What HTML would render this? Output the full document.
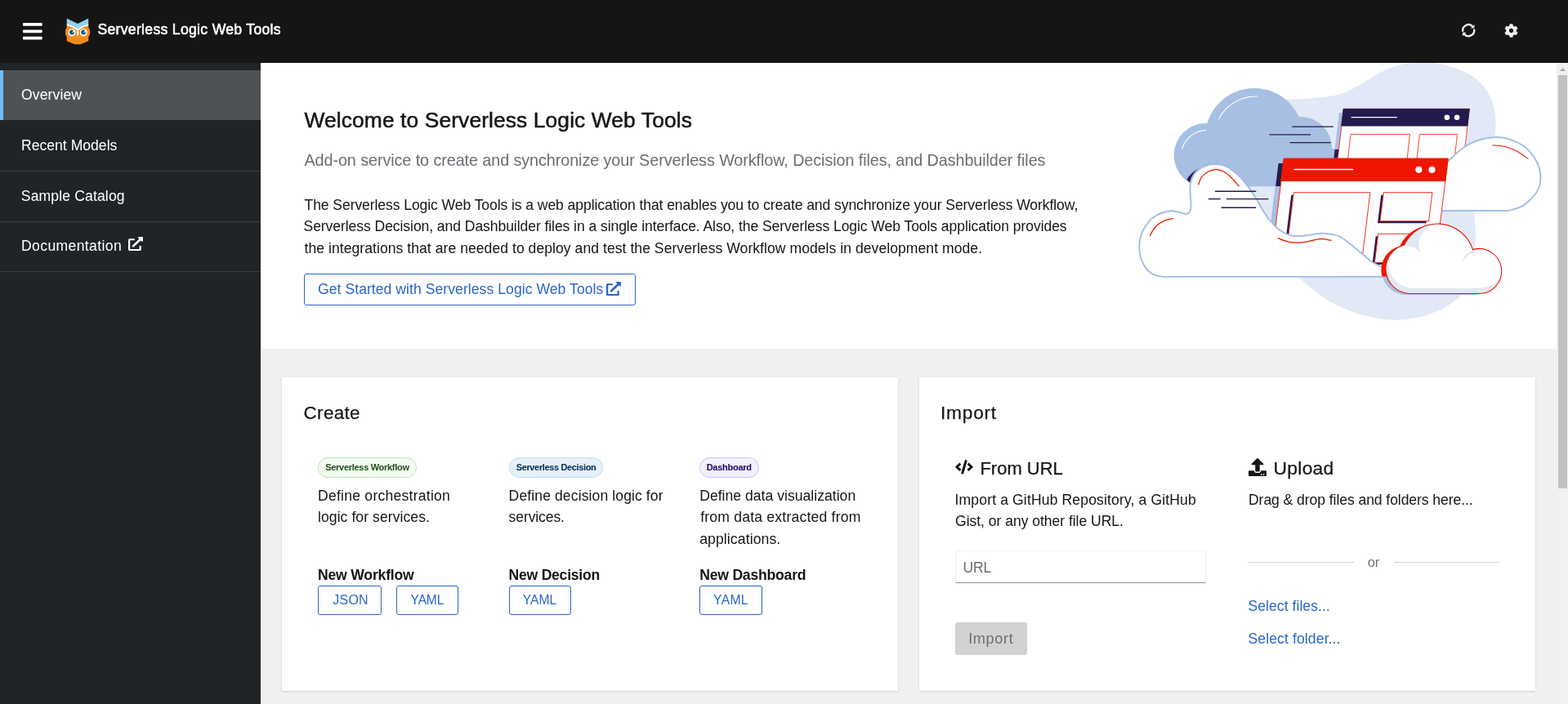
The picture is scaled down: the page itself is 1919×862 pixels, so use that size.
<!DOCTYPE html>
<html lang="en">
<head>
<meta charset="utf-8">
<title>Serverless Logic Web Tools</title>
<style>
*{box-sizing:border-box}
html,body{margin:0;padding:0}
body{width:1919px;height:862px;overflow:hidden;position:relative;background:#f0f0f0;color:#151515;font-family:"Liberation Sans",sans-serif;font-size:17.6px;-webkit-font-smoothing:antialiased}
h1,h2,h3,p,ul,li{margin:0;padding:0;font-weight:400;list-style:none}
.t{position:absolute;white-space:nowrap;line-height:40px;height:40px;display:block}
.ico{position:absolute;display:block;overflow:visible}
.masthead,.sidebar,.main{will-change:transform}
.masthead{position:absolute;left:0;top:0;width:1919px;height:77px;background:#151515}
.sidebar{position:absolute;left:0;top:77px;width:319px;height:785px;background:#212427}
.nav-item{position:absolute;left:0;width:319px;height:62px}
.nav-item.current{background:#4f5255}
.nav-item.current::before{content:"";position:absolute;left:0;top:0;bottom:0;width:4px;background:#73bcf7}
.nav-sep{position:absolute;left:0;width:319px;height:1px;background:#3c3f42}
.main{position:absolute;left:319px;top:77px;width:1586px;height:785px;overflow:hidden;background:#f0f0f0}
.hero{position:absolute;left:0;top:0;width:1586px;height:350px;background:#fff;overflow:hidden}
button{appearance:none;-webkit-appearance:none;margin:0;padding:0;font:inherit;color:inherit;text-align:left;overflow:visible;cursor:pointer}
a{text-decoration:none;color:inherit}
.btn{position:absolute;display:block;border:1px solid #2a65ca;border-radius:3px;background:#fff}
.btn.disabled{border:0;background:#d2d2d2}
.card{position:absolute;top:385px;width:754px;height:384px;background:#fff;box-shadow:0 1px 2px 0 rgba(3,3,3,.12),0 0 2px 0 rgba(3,3,3,.06)}
.label{position:absolute;height:25px;border-radius:13px;border:1px solid}
.label.green{background:#f3faf2;border-color:#bde5b8}
.label.blue{background:#e7f1fa;border-color:#bee1f4}
.label.purple{background:#f2f0fc;border-color:#cbc1ff}
.input{position:absolute;display:block;margin:0;background:#fff;border:1px solid #f0f0f0;border-bottom-color:#8a8d90;border-radius:0;outline:0;font-family:inherit;color:#151515}
.input::placeholder{color:#6a6e73;opacity:1}
.hr{position:absolute;height:1px;background:#d2d2d2}
.scroll{position:absolute;left:1905px;top:77px;width:14px;height:785px;background:#f1f1f1}
.scroll .thumb{position:absolute;left:2px;top:15px;width:11px;height:506px;background:#c1c1c1}
.scroll .up{position:absolute;left:0;top:0;width:14px;height:15px}
</style>
</head>
<body>
<header class="masthead">
<svg class="ico" style="left:27.7px;top:24.5px;width:23.7px;height:26.6px" viewBox="0 0 448 512" preserveAspectRatio="none" fill="#fff" aria-hidden="true"><path d="M16 132h416c8.837 0 16-7.163 16-16V76c0-8.837-7.163-16-16-16H16C7.163 60 0 67.163 0 76v40c0 8.837 7.163 16 16 16zm0 160h416c8.837 0 16-7.163 16-16v-40c0-8.837-7.163-16-16-16H16c-8.837 0-16 7.163-16 16v40c0 8.837 7.163 16 16 16zm0 160h416c8.837 0 16-7.163 16-16v-40c0-8.837-7.163-16-16-16H16c-8.837 0-16 7.163-16 16v40c0 8.837 7.163 16 16 16z"/></svg>
<svg class="ico" style="left:78px;top:20px;width:36px;height:38px" viewBox="78 20 36 38" aria-hidden="true">
<path d="M81.7 30.5C81.7 30.5 88 31.5 95.1 36.2C102 31.5 108.2 30.5 108.2 30.5L108.2 33.6C109.6 35.2 110.2 37.2 110.2 39.2C110.2 41.4 109.5 43.6 108.2 45.2L108.2 50.2L98.4 54.2L91.5 54.2L81.7 50.2L81.7 45.2C80.4 43.6 79.9 41.4 79.9 39.2C79.9 37.2 80.4 35.2 81.7 33.6Z" fill="#f28b1e"/>
<path d="M81.7 22.5L95.1 28.9L108.2 22.5L108.2 30.2C103 31 98.6 33 95.1 35.6C91.4 33 87 31 81.7 30.2Z" fill="#90d2e8"/>
<path d="M81.7 29.7C87 30.5 91.4 32.4 95.1 35.2C98.6 32.4 103 30.5 108.2 29.7L108.2 31.4C103.4 32.2 99.4 34.2 96 37.2L96 41.4L94.2 41.4L94.2 37.2C90.8 34.2 86.6 32.2 81.7 31.4Z" fill="#fff"/>
<circle cx="88" cy="39.8" r="4.6" fill="#fff"/>
<circle cx="102.2" cy="39.8" r="4.6" fill="#fff"/>
<path d="M88.3 39.9L91.1 39.3A3.1 3.1 0 1 1 89.9 37.1Z" fill="#175a78"/>
<path d="M102.5 39.9L105.3 39.3A3.1 3.1 0 1 1 104.1 37.1Z" fill="#175a78"/>
<path d="M94 41.2C94 40.4 96.2 40.4 96.2 41.2C96.2 42.4 95.7 43.6 95.1 44.2C94.5 43.6 94 42.4 94 41.2Z" fill="#f4f4f4"/>
</svg>
<span class="t" style="left:119.4px;top:16px;font-size:17.6px;letter-spacing:0.312px;color:#ffffff;-webkit-text-stroke:0.55px #fff;">Serverless Logic Web Tools</span>
<svg class="ico" style="left:1784px;top:24px;width:27px;height:27px" viewBox="1784 24 27 27" aria-hidden="true"><path d="M1790.35 38.66A7.0 7.0 0 0 1 1802.40 32.52M1804.05 35.74A7.0 7.0 0 0 1 1792.00 41.88" fill="none" stroke="#f0f0f0" stroke-width="2.4"/><path d="M1804.36 34.54L1804.56 30.09L1799.91 34.58ZM1790.04 39.86L1789.84 44.31L1794.49 39.82Z" fill="#f0f0f0"/></svg>
<svg class="ico" style="left:1840.8px;top:29px;width:17px;height:17px" viewBox="0 0 512 512" preserveAspectRatio="none" fill="#f0f0f0" aria-hidden="true"><path d="M487.4 315.7l-42.6-24.6c4.3-23.2 4.3-47 0-70.2l42.6-24.6c4.9-2.8 7.1-8.6 5.5-14-11.1-35.6-30-67.8-54.7-94.6-3.8-4.1-10-5.1-14.8-2.3L380.8 110c-17.9-15.4-38.5-27.3-60.8-35.1V25.8c0-5.6-3.9-10.5-9.4-11.7-36.7-8.2-74.3-7.8-109.2 0-5.5 1.2-9.4 6.1-9.4 11.7V75c-22.2 7.9-42.8 19.8-60.8 35.1L88.7 85.5c-4.9-2.8-11-1.9-14.8 2.3-24.7 26.7-43.6 58.9-54.7 94.6-1.7 5.4.6 11.2 5.5 14L67.3 221c-4.3 23.2-4.3 47 0 70.2l-42.6 24.6c-4.9 2.8-7.1 8.6-5.5 14 11.1 35.6 30 67.8 54.7 94.6 3.8 4.1 10 5.1 14.8 2.3l42.6-24.6c17.9 15.4 38.5 27.3 60.8 35.1v49.2c0 5.6 3.9 10.5 9.4 11.7 36.7 8.2 74.3 7.8 109.2 0 5.5-1.2 9.4-6.1 9.4-11.7v-49.2c22.2-7.9 42.8-19.8 60.8-35.1l42.6 24.6c4.9 2.8 11 1.9 14.8-2.3 24.7-26.7 43.6-58.9 54.7-94.6 1.5-5.5-.7-11.3-5.6-14.1zM256 336c-44.1 0-80-35.9-80-80s35.9-80 80-80 80 35.9 80 80-35.9 80-80 80z"/></svg>
</header>
<nav class="sidebar"><ul>
<li class="nav-item current" style="top:9px;height:61px"><a class="t" style="left:26.1px;top:10px;font-size:17.6px;letter-spacing:0.086px;color:#ffffff;">Overview</a></li>
<li class="nav-item" style="top:70px"><a class="t" style="left:26.0px;top:11px;font-size:17.6px;color:#ffffff;">Recent Models</a></li>
<li class="nav-item" style="top:132px"><a class="t" style="left:25.8px;top:11px;font-size:17.6px;letter-spacing:0.123px;color:#ffffff;">Sample Catalog</a></li>
<li class="nav-item" style="top:194px"><a class="t" style="left:26.0px;top:10px;font-size:17.6px;letter-spacing:0.367px;color:#ffffff;">Documentation</a><svg class="ico" style="left:156.9px;top:18.7px;width:18.0px;height:17.0px" viewBox="0 0 512 512" preserveAspectRatio="none" fill="#fff" aria-hidden="true"><path d="M432,320H400a16,16,0,0,0-16,16V448H64V128H208a16,16,0,0,0,16-16V80a16,16,0,0,0-16-16H48A48,48,0,0,0,0,112V464a48,48,0,0,0,48,48H400a48,48,0,0,0,48-48V336A16,16,0,0,0,432,320ZM488,0h-128c-21.37,0-32.05,25.91-17,41l35.73,35.73L135,320.37a24,24,0,0,0,0,34L157.67,377a24,24,0,0,0,34,0L435.28,133.32,471,169c15,15,41,4.5,41-17V24A24,24,0,0,0,488,0Z"/></svg></li>
</ul>
<div class="nav-sep" style="top:132px"></div>
<div class="nav-sep" style="top:194px"></div>
<div class="nav-sep" style="top:255px"></div>
</nav>
<main class="main">
<section class="hero">
<svg class="illus" style="position:absolute;left:1061px;top:0;width:525px;height:350px" viewBox="1380 77 525 350" aria-hidden="true">
<path d="M1560.0 125.0C1573.3 120.2 1588.3 122.2 1600.0 121.0C1611.7 119.8 1621.8 119.1 1630.0 117.6C1638.2 116.1 1642.7 114.7 1649.0 112.0C1655.3 109.3 1661.7 105.2 1668.0 101.6C1674.3 98.0 1680.4 93.5 1686.7 90.2C1693.0 86.9 1699.3 83.8 1705.6 81.7C1711.9 79.6 1718.2 78.5 1724.5 77.6C1730.8 76.7 1737.2 76.4 1743.4 76.5C1749.7 76.6 1755.7 76.8 1762.0 78.0C1768.3 79.2 1774.7 81.3 1781.0 83.6C1787.3 85.9 1794.3 88.4 1800.0 92.0C1805.7 95.6 1810.9 100.2 1815.0 105.0C1819.1 109.8 1822.3 115.1 1824.7 120.5C1827.1 125.9 1828.5 131.8 1829.5 137.5C1830.5 143.2 1830.8 148.8 1830.5 155.0C1830.2 161.2 1830.1 166.7 1828.0 175.0C1825.9 183.3 1821.3 195.0 1818.0 205.0C1814.7 215.0 1810.2 225.8 1808.0 235.0C1805.8 244.2 1804.8 251.3 1804.5 260.0C1804.2 268.7 1806.1 278.3 1806.0 287.0C1805.9 295.7 1805.5 303.2 1804.0 312.0C1802.5 320.8 1799.8 331.6 1797.0 340.0C1794.2 348.4 1792.8 355.8 1787.0 362.4C1781.2 369.0 1770.8 375.0 1762.0 379.4C1753.2 383.8 1743.4 386.8 1734.0 388.8C1724.6 390.9 1715.1 391.9 1705.6 391.7C1696.1 391.5 1686.4 389.9 1677.0 387.9C1667.6 385.8 1657.5 382.7 1649.0 379.4C1640.5 376.1 1632.8 372.1 1625.8 368.0C1618.8 363.9 1612.9 359.5 1606.9 354.8C1600.9 350.1 1597.8 347.2 1590.0 339.7C1582.2 332.2 1571.7 323.3 1560.0 310.0C1548.3 296.7 1530.0 278.3 1520.0 260.0C1510.0 241.7 1500.0 218.3 1500.0 200.0C1500.0 181.7 1510.0 162.5 1520.0 150.0C1530.0 137.5 1546.7 129.8 1560.0 125.0Z" fill="#e0e9f5"/>
<g fill="#a7bfe3">
<circle cx="1535" cy="168" r="60" />
<circle cx="1476" cy="190" r="39.3" />
<circle cx="1592" cy="181" r="38" />
<polygon points="1462.0,228.3 1462.0,190.0 1629.0,175.0 1629.0,182.0 1634.0,182.0 1634.0,194.0 1570.0,194.0 1566.0,228.3" />
</g>
<path d="M1491.6 145.8C1492.4 144.5 1494.8 140.2 1496.7 137.7C1498.7 135.2 1500.9 132.8 1503.3 130.7C1505.7 128.6 1508.4 126.7 1511.1 125.1C1513.9 123.4 1516.8 122.1 1519.8 121.0C1522.8 119.9 1526.0 119.1 1529.2 118.6C1532.3 118.1 1537.2 118.1 1538.8 118.0" fill="none" stroke="#fff" stroke-width="1.1" stroke-linecap="round"/>
<path d="M1446.7 182.3C1447.1 181.3 1448.2 178.1 1449.2 176.2C1450.2 174.3 1451.5 172.4 1452.9 170.8C1454.3 169.1 1455.9 167.5 1457.6 166.2C1459.3 164.8 1461.2 163.6 1463.2 162.7C1465.2 161.7 1467.3 161.0 1469.4 160.4C1471.5 159.9 1474.8 159.7 1475.9 159.5" fill="none" stroke="#fff" stroke-width="1.1" stroke-linecap="round"/>
<path d="M1452.4 219.7L1456 223.6Q1458.5 213 1467 206.3Q1458 211 1452.4 219.7Z" fill="#251a4e"/>
<line x1="1581.4" y1="155.1" x2="1631.8" y2="155.1" stroke="#251a4e" stroke-width="1.4"/>
<line x1="1553.6" y1="164.9" x2="1604" y2="164.9" stroke="#251a4e" stroke-width="1.4"/>
<line x1="1578.5" y1="174.6" x2="1628.8" y2="174.6" stroke="#251a4e" stroke-width="1.4"/>
<polygon points="1638.9,138.0 1643.8,138.0 1638.3,185.0 1633.4,185.0" fill="#a7bfe3"/>
<polygon points="1633.6,183.0 1638.6,183.0 1637.4,193.8 1632.4,193.8" fill="#251a4e"/>
<polygon points="1644.2,133.4 1798.3,133.4 1790.7,200.0 1636.6,200.0" fill="#fff" stroke="#ee1600" stroke-width="0.8"/>
<polygon points="1644.2,133.4 1798.3,133.4 1795.9,154.1 1641.8,154.1" fill="#251a4e" stroke="#251a4e" stroke-width="0.9"/>
<line x1="1653.6" y1="143.6" x2="1709.8" y2="143.6" stroke="#fff" stroke-width="1.2"/>
<circle cx="1770.9" cy="143.7" r="3.3" fill="#fff"/>
<circle cx="1783.1" cy="143.7" r="3.3" fill="#fff"/>
<polygon points="1653.0,164.4 1725.5,164.4 1721.5,200.0 1649.0,200.0" fill="#fff" stroke="#ee1600" stroke-width="0.8"/>
<polygon points="1737.4,164.4 1783.5,164.4 1779.5,200.0 1733.4,200.0" fill="#fff" stroke="#ee1600" stroke-width="0.8"/>
<path d="M1760.0 210.0C1762.0 208.0 1766.7 202.8 1771.8 198.0C1776.9 193.2 1784.4 185.4 1790.7 181.0C1797.0 176.6 1803.0 173.7 1809.6 171.5C1816.2 169.3 1824.1 168.2 1830.4 168.1C1836.7 167.9 1841.4 168.6 1847.4 170.6C1853.4 172.6 1860.9 175.8 1866.3 180.0C1871.7 184.2 1876.4 190.5 1879.6 196.0C1882.8 201.5 1884.6 207.4 1885.2 213.1C1885.8 218.8 1885.0 225.3 1883.4 230.0C1881.8 234.7 1879.3 237.5 1875.8 241.3C1872.3 245.1 1867.6 249.9 1862.6 252.7C1857.5 255.5 1848.3 257.1 1845.5 258.0L1760 258Z" fill="#fff" stroke="#a3bde3" stroke-width="1.9"/>
<path d="M1826.6 177.8C1828.8 178.0 1835.8 178.3 1840.0 179.2C1844.2 180.1 1848.3 181.4 1852.0 183.0C1855.7 184.6 1858.9 186.6 1862.0 188.5C1865.1 190.4 1869.1 193.6 1870.5 194.6" fill="none" stroke="#ee1600" stroke-width="1.1"/>
<polygon points="1560.7,228.0 1567.2,228.0 1559.6,290.0 1553.1,290.0" fill="#a7bfe3"/>
<polygon points="1564.6,200.0 1570.6,200.0 1567.2,228.0 1561.2,228.0" fill="#251a4e"/>
<polygon points="1571.3,194.2 1772.2,194.2 1755.1,334.0 1554.2,334.0" fill="#fff" stroke="#ee1600" stroke-width="0.9"/>
<polygon points="1571.3,194.2 1772.2,194.2 1768.9,221.6 1568.0,221.6" fill="#ee1600" stroke="#ee1600" stroke-width="0.9"/>
<line x1="1583.3" y1="207.5" x2="1656.5" y2="207.5" stroke="#fff" stroke-width="1.5"/>
<circle cx="1736.4" cy="207.8" r="4.1" fill="#fff"/>
<circle cx="1752.5" cy="207.8" r="4.1" fill="#fff"/>
<polygon points="1580.3,238.7 1583.3,238.7 1573.0,320.0 1663.6,320.0 1663.6,322.5 1570.0,322.5" fill="#251a4e"/><polygon points="1583.3,235.7 1676.9,235.7 1666.6,320.0 1573.0,320.0" fill="#fff" stroke="#ee1600" stroke-width="0.9"/>
<polygon points="1690.3,238.7 1693.3,238.7 1689.0,270.7 1745.6,270.7 1745.6,273.2 1686.0,273.2" fill="#251a4e"/><polygon points="1693.3,235.7 1752.9,235.7 1748.6,270.7 1689.0,270.7" fill="#fff" stroke="#ee1600" stroke-width="0.9"/>
<polygon points="1683.7,289.3 1686.7,289.3 1682.4,321.5 1739.2,321.5 1739.2,324.0 1679.4,324.0" fill="#251a4e"/><polygon points="1686.7,286.3 1746.5,286.3 1742.2,321.5 1682.4,321.5" fill="#fff" stroke="#ee1600" stroke-width="0.9"/>
<path d="M1423.7 338.9C1422.5 338.7 1418.8 338.2 1416.5 337.6C1414.2 337.0 1412.1 336.3 1410.2 335.3C1408.3 334.3 1406.7 332.9 1405.2 331.5C1403.7 330.1 1402.4 328.4 1401.2 326.6C1400.0 324.8 1398.9 322.6 1398.0 320.5C1397.1 318.4 1396.4 316.2 1395.8 314.0C1395.2 311.8 1394.8 309.6 1394.5 307.5C1394.2 305.4 1394.3 303.4 1394.3 301.5C1394.3 299.6 1394.5 297.8 1394.7 296.0C1395.0 294.2 1395.2 292.7 1395.8 290.7C1396.3 288.7 1397.1 286.1 1398.0 284.0C1398.9 281.9 1400.0 280.1 1401.2 278.1C1402.4 276.2 1403.8 274.1 1405.3 272.3C1406.8 270.5 1408.5 268.7 1410.2 267.3C1411.9 265.9 1413.5 264.8 1415.3 263.7C1417.1 262.6 1419.0 261.8 1421.0 261.0C1423.0 260.2 1424.9 259.6 1427.0 259.2C1429.1 258.8 1431.5 258.4 1433.5 258.3C1435.5 258.2 1437.2 258.6 1439.0 258.9C1440.8 259.2 1442.7 259.7 1444.3 260.1C1445.9 260.5 1447.2 261.2 1448.5 261.5C1449.8 261.8 1451.0 262.0 1452.0 261.9C1453.0 261.8 1453.9 261.5 1454.6 261.0C1455.3 260.5 1455.8 259.9 1456.2 259.0C1456.7 258.1 1457.1 256.8 1457.3 255.5C1457.5 254.2 1457.6 252.8 1457.6 251.1C1457.6 249.3 1457.3 247.1 1457.2 245.0C1457.1 242.9 1457.0 241.1 1456.9 238.5C1456.8 235.9 1456.3 232.4 1456.5 229.6C1456.7 226.8 1457.0 224.2 1457.8 221.5C1458.6 218.8 1459.8 215.8 1461.4 213.4C1463.1 211.0 1465.2 208.9 1467.7 207.1C1470.2 205.3 1473.4 203.6 1476.7 202.6C1480.0 201.6 1483.9 201.0 1487.5 201.1C1491.1 201.2 1494.7 201.6 1498.3 202.9C1501.9 204.2 1505.4 206.2 1509.0 208.9C1512.6 211.6 1516.5 215.2 1519.8 218.8C1523.1 222.4 1525.8 226.2 1528.8 230.4C1531.8 234.6 1535.1 239.6 1537.8 243.9C1540.5 248.2 1542.3 252.2 1545.0 256.5C1547.7 260.8 1550.6 265.6 1554.0 269.7C1557.4 273.8 1561.5 278.1 1565.3 281.0C1569.1 283.9 1572.8 285.9 1576.6 287.3C1580.4 288.7 1583.6 289.2 1588.0 289.3C1592.4 289.4 1598.0 288.3 1603.0 287.7C1608.0 287.1 1613.1 285.8 1618.2 285.8C1623.3 285.8 1629.6 286.9 1633.4 287.7C1637.2 288.5 1638.1 288.6 1641.3 290.5C1644.5 292.4 1648.3 295.5 1652.7 299.0C1657.1 302.5 1663.4 307.7 1667.8 311.3C1672.2 314.9 1675.4 318.3 1679.2 320.8C1683.0 323.3 1686.2 324.7 1690.5 326.4C1694.8 328.1 1699.8 329.7 1705.0 331.0C1710.2 332.3 1716.2 332.7 1722.0 334.0C1727.8 335.3 1737.0 338.0 1740.0 338.8Z" fill="#fff" stroke="#a3bde3" stroke-width="1.9" stroke-linejoin="round"/>
<path d="M1407.5 288.9C1407.9 287.9 1409.1 285.0 1410.1 283.3C1411.2 281.5 1412.5 279.8 1413.8 278.3C1415.2 276.7 1416.8 275.3 1418.4 274.0C1420.1 272.8 1421.9 271.7 1423.8 270.8C1425.6 269.9 1427.6 269.1 1429.6 268.6C1431.6 268.1 1434.7 267.8 1435.7 267.6" fill="none" stroke="#ee1600" stroke-width="1.3"/>
<path d="M1466.6 226.4C1467.2 224.8 1468.6 219.7 1470.5 217.0C1472.4 214.3 1475.1 212.1 1478.0 210.5C1480.9 208.9 1484.5 207.7 1487.8 207.6C1491.0 207.5 1494.3 208.3 1497.5 210.0C1500.7 211.7 1503.8 214.4 1507.0 217.5C1510.2 220.6 1514.9 226.5 1516.5 228.3" fill="none" stroke="#ee1600" stroke-width="1.3"/>
<path d="M1563.8 291.4C1565.3 292.0 1569.6 294.1 1573.0 295.0C1576.4 295.9 1580.1 296.9 1584.2 297.1C1588.3 297.3 1593.4 296.9 1597.4 296.4C1601.4 295.9 1604.5 294.7 1608.0 294.0C1611.5 293.3 1614.6 292.3 1618.2 292.4C1621.8 292.5 1627.7 294.3 1629.6 294.7" fill="none" stroke="#ee1600" stroke-width="1.3"/>
<line x1="1487" y1="234.2" x2="1537.3" y2="234.2" stroke="#251a4e" stroke-width="1.4"/>
<line x1="1479" y1="243.6" x2="1493.8" y2="243.6" stroke="#251a4e" stroke-width="1.4"/>
<line x1="1501" y1="243.6" x2="1552.4" y2="243.6" stroke="#251a4e" stroke-width="1.4"/>
<line x1="1494.6" y1="254.2" x2="1537" y2="254.2" stroke="#251a4e" stroke-width="1.4"/>
<clipPath id="cu"><rect x="1380" y="77" width="525" height="261.7"/></clipPath>
<clipPath id="cl"><rect x="1380" y="338.7" width="525" height="100"/></clipPath>
<path d="M1720.7 361.0A30.3 30.3 0 0 1 1713.0 301.4A45.25 45.25 0 0 1 1797.0 307.1A27.5 27.5 0 1 1 1804.7 361.0Z" fill="#ee1600" clip-path="url(#cu)"/>
<path d="M1721.2 361.0A30.3 30.3 0 0 1 1713.5 301.4A45.25 45.25 0 0 1 1797.5 307.1A27.5 27.5 0 1 1 1805.2 361.0Z" fill="#a7bfe3" clip-path="url(#cl)"/>
<path d="M1726.2 359.5A30.3 30.3 0 0 1 1718.5 299.9A45.25 45.25 0 0 1 1802.5 305.6A27.5 27.5 0 1 1 1810.2 359.5Z" fill="#e0e9f5"/>
<clipPath id="sc"><path d="M1726.2 359.5A30.3 30.3 0 0 1 1718.5 299.9A45.25 45.25 0 0 1 1802.5 305.6A27.5 27.5 0 1 1 1810.2 359.5Z"/></clipPath>
<g clip-path="url(#sc)" fill="#fff">
<circle cx="1729.5" cy="323" r="30" />
<circle cx="1812" cy="324.6" r="28" />
<rect x="1729.5" y="300" width="82.5" height="52.6"/>
<circle cx="1762" cy="300" r="25.6" />
<path d="M1748 278L1810 270L1815 330L1760 330Z" />
<path d="M1717.5 301.7C1717.5 303.3 1721.7 301.3 1724.0 301.6C1726.3 301.9 1729.3 302.6 1731.2 303.4C1733.1 304.2 1734.3 305.2 1735.5 306.2C1736.7 307.2 1738.4 310.1 1738.6 309.6C1738.8 309.1 1737.0 305.4 1736.6 303.0C1736.2 300.6 1736.0 297.6 1736.4 295.0C1736.8 292.4 1737.7 289.8 1739.0 287.5C1740.3 285.2 1742.4 283.1 1744.0 281.5C1745.6 279.9 1750.0 277.8 1748.5 278.0C1747.0 278.2 1739.1 280.7 1735.0 283.0C1730.9 285.3 1726.9 288.9 1724.0 292.0C1721.1 295.1 1717.5 300.1 1717.5 301.7Z" fill="#e0e9f5"/>
<path d="M1803.5 305.6C1801.7 306.4 1799.0 307.9 1797.0 309.5C1795.0 311.1 1793.1 313.3 1791.5 315.5C1789.9 317.7 1787.4 322.6 1787.6 322.8C1787.8 323.0 1790.8 318.6 1792.5 316.8C1794.2 315.0 1795.9 313.4 1798.0 312.0C1800.1 310.6 1802.7 309.1 1805.0 308.2C1807.3 307.2 1811.5 306.8 1812.0 306.3C1812.5 305.8 1809.4 305.1 1808.0 305.0C1806.6 304.9 1805.3 304.9 1803.5 305.6Z" fill="#e0e9f5"/>
</g>
<path d="M1726.2 359.5A30.3 30.3 0 0 1 1718.5 299.9A45.25 45.25 0 0 1 1802.5 305.6A27.5 27.5 0 1 1 1810.2 359.5Z" fill="none" stroke="#ee1600" stroke-width="1.1" stroke-linejoin="round"/>
</svg>
<h1 class="t" style="left:53.5px;top:50px;font-size:26.4px;letter-spacing:0.097px;color:#151515;-webkit-text-stroke:0.5px #151515;">Welcome to Serverless Logic Web Tools</h1>
<p class="t" style="left:53.5px;top:99px;font-size:19.8px;letter-spacing:-0.083px;color:#6a6e73;">Add-on service to create and synchronize your Serverless Workflow, Decision files, and Dashbuilder files</p>
<p><span class="t" style="left:53.5px;top:154px;font-size:17.6px;letter-spacing:-0.097px;color:#151515;">The Serverless Logic Web Tools is a web application that enables you to create and synchronize your Serverless Workflow,</span><span class="t" style="left:52.5px;top:180px;font-size:17.6px;letter-spacing:-0.089px;color:#151515;">Serverless Decision, and Dashbuilder files in a single interface. Also, the Serverless Logic Web Tools application provides</span><span class="t" style="left:53.5px;top:207px;font-size:17.6px;letter-spacing:0.034px;color:#151515;">the integrations that are needed to deploy and test the Serverless Workflow models in development mode.</span></p>
<a class="btn" style="left:53px;top:258px;width:406px;height:39px"><span class="t" style="left:16.0px;top:-2px;font-size:17.6px;letter-spacing:0.043px;color:#2a65ca;">Get Started with Serverless Logic Web Tools</span><svg class="ico" style="left:369.2px;top:8.7px;width:18.0px;height:17.0px" viewBox="0 0 512 512" preserveAspectRatio="none" fill="#2a65ca" aria-hidden="true"><path d="M432,320H400a16,16,0,0,0-16,16V448H64V128H208a16,16,0,0,0,16-16V80a16,16,0,0,0-16-16H48A48,48,0,0,0,0,112V464a48,48,0,0,0,48,48H400a48,48,0,0,0,48-48V336A16,16,0,0,0,432,320ZM488,0h-128c-21.37,0-32.05,25.91-17,41l35.73,35.73L135,320.37a24,24,0,0,0,0,34L157.67,377a24,24,0,0,0,34,0L435.28,133.32,471,169c15,15,41,4.5,41-17V24A24,24,0,0,0,488,0Z"/></svg></a>
</section>
<section class="card" style="left:26px">
<h2 class="t" style="left:26.6px;top:24px;font-size:22.4px;letter-spacing:0.34px;color:#151515;-webkit-text-stroke:0.25px #151515;">Create</h2>
<article>
<span class="label green" style="left:44px;top:98px;width:121px"><span class="t" style="left:8.2px;top:-9px;font-size:11px;font-weight:700;letter-spacing:-0.289px;color:#1e4f18;">Serverless Workflow</span></span>
<p><span class="t" style="left:44.0px;top:125px;font-size:17.6px;letter-spacing:0.232px;color:#151515;">Define orchestration</span><span class="t" style="left:44.0px;top:151px;font-size:17.6px;letter-spacing:0.056px;color:#151515;">logic for services.</span></p>
<h3 class="t" style="left:44.0px;top:222px;font-size:17.6px;font-weight:700;letter-spacing:-0.2px;color:#151515;">New Workflow</h3>
<button type="button" class="btn" style="left:44px;top:255px;width:78px;height:36px"><span class="t" style="left:17.3px;top:-3px;font-size:16px;letter-spacing:0.233px;color:#2a65ca;">JSON</span></button>
<button type="button" class="btn" style="left:140px;top:255px;width:76px;height:36px"><span class="t" style="left:16.6px;top:-3px;font-size:15.6px;letter-spacing:-0.2px;color:#2a65ca;">YAML</span></button>
</article>
<article>
<span class="label blue" style="left:278px;top:98px;width:115px"><span class="t" style="left:7.7px;top:-9px;font-size:11px;font-weight:700;letter-spacing:-0.356px;color:#002952;">Serverless Decision</span></span>
<p><span class="t" style="left:277.6px;top:125px;font-size:17.6px;letter-spacing:0.092px;color:#151515;">Define decision logic for</span><span class="t" style="left:277.6px;top:151px;font-size:17.6px;letter-spacing:-0.125px;color:#151515;">services.</span></p>
<h3 class="t" style="left:277.6px;top:222px;font-size:17.6px;font-weight:700;letter-spacing:-0.255px;color:#151515;">New Decision</h3>
<button type="button" class="btn" style="left:278px;top:255px;width:76px;height:36px"><span class="t" style="left:15.7px;top:-3px;font-size:15.6px;letter-spacing:0.033px;color:#2a65ca;">YAML</span></button>
</article>
<article>
<span class="label purple" style="left:511px;top:98px;width:73px"><span class="t" style="left:7.7px;top:-9px;font-size:11px;font-weight:700;letter-spacing:-0.263px;color:#1f0066;">Dashboard</span></span>
<p><span class="t" style="left:511.2px;top:125px;font-size:17.6px;letter-spacing:0.012px;color:#151515;">Define data visualization</span><span class="t" style="left:512.2px;top:151px;font-size:17.6px;letter-spacing:0.196px;color:#151515;">from data extracted from</span><span class="t" style="left:511.2px;top:178px;font-size:17.6px;letter-spacing:0.1px;color:#151515;">applications.</span></p>
<h3 class="t" style="left:511.2px;top:222px;font-size:17.6px;font-weight:700;letter-spacing:-0.217px;color:#151515;">New Dashboard</h3>
<button type="button" class="btn" style="left:511px;top:255px;width:77px;height:36px"><span class="t" style="left:16.0px;top:-3px;font-size:15.8px;letter-spacing:0.267px;color:#2a65ca;">YAML</span></button>
</article>
</section>
<section class="card" style="left:806px">
<h2 class="t" style="left:26.0px;top:23px;font-size:22.8px;letter-spacing:0.72px;color:#151515;-webkit-text-stroke:0.25px #151515;">Import</h2>
<article>
<svg class="ico" style="left:43.8px;top:101.2px;width:22px;height:17.6px" viewBox="0 0 640 512" preserveAspectRatio="none" fill="#151515" aria-hidden="true"><path d="M278.9 511.5l-61-17.7c-6.4-1.8-10-8.5-8.2-14.9L346.2 8.7c1.8-6.4 8.5-10 14.9-8.2l61 17.7c6.4 1.8 10 8.5 8.2 14.9L293.8 503.3c-1.900 6.4-8.5 10.1-14.9 8.2zm-114-112.2l43.5-46.4c4.6-4.9 4.3-12.7-.8-17.2L117 256l90.6-79.7c5.1-4.5 5.5-12.3.8-17.2l-43.5-46.4c-4.5-4.8-12.1-5.1-17-.5L3.800 247.2c-5.1 4.7-5.1 12.8 0 17.5l144.1 135.1c4.9 4.6 12.5 4.4 17-.5zm327.200.6l144.1-135.1c5.1-4.7 5.1-12.8 0-17.5L492.1 112.1c-4.8-4.500-12.400-4.300-17 .5L431.600 159c-4.600 4.900-4.300 12.700.8 17.200L523 256l-90.600 79.700c-5.100 4.500-5.500 12.300-.8 17.200l43.500 46.400c4.500 4.900 12.100 5.100 17 .6z"/></svg>
<h3 class="t" style="left:74.4px;top:92px;font-size:22px;color:#151515;-webkit-text-stroke:0.25px #151515;">From URL</h3>
<p><span class="t" style="left:43.6px;top:130px;font-size:17.6px;letter-spacing:0.117px;color:#151515;">Import a GitHub Repository, a GitHub</span><span class="t" style="left:44.0px;top:156px;font-size:17.6px;letter-spacing:-0.048px;color:#151515;">Gist, or any other file URL.</span></p>
<input class="input" type="text" placeholder="URL" aria-label="URL" style="left:44px;top:212px;width:307px;height:40px;padding:2px 0 0 8.4px;font-size:17.6px;letter-spacing:-0.2px;line-height:40px">
<button type="button" disabled class="btn disabled" style="left:44px;top:300px;width:88px;height:40px"><span class="t" style="left:16.2px;top:0px;font-size:18.2px;letter-spacing:0.6px;color:#6a6e73;">Import</span></button>
</article>
<article>
<svg class="ico" style="left:403.2px;top:99px;width:22px;height:22px" viewBox="0 0 512 512" preserveAspectRatio="none" fill="#151515" aria-hidden="true"><path d="M296 384h-80c-13.3 0-24-10.7-24-24V192h-87.7c-17.8 0-26.700-21.5-14.100-34.100L242.300 5.700c7.500-7.500 19.800-7.500 27.300 0l152.200 152.200c12.600 12.600 3.700 34.100-14.100 34.100H320v168c0 13.300-10.700 24-24 24zm216-8v112c0 13.300-10.700 24-24 24H24c-13.300 0-24-10.700-24-24V376c0-13.300 10.700-24 24-24h136v8c0 30.900 25.100 56 56 56h80c30.900 0 56-25.100 56-56v-8h136c13.300 0 24 10.700 24 24zm-124 88c0-11-9-20-20-20s-20 9-20 20 9 20 20 20 20-9 20-20zm64 0c0-11-9-20-20-20s-20 9-20 20 9 20 20 20 20-9 20-20z"/></svg>
<h3 class="t" style="left:433.6px;top:91px;font-size:22.8px;letter-spacing:0.28px;color:#151515;-webkit-text-stroke:0.25px #151515;">Upload</h3>
<p><span class="t" style="left:403.0px;top:130px;font-size:17.6px;letter-spacing:-0.083px;color:#151515;">Drag &amp; drop files and folders here...</span></p>
<div class="hr" style="left:403px;top:226px;width:129px"></div>
<span class="t" style="left:548.8px;top:207px;font-size:16.6px;letter-spacing:-0.2px;color:#6a6e73;">or</span>
<div class="hr" style="left:581px;top:226px;width:129px"></div>
<a class="t" style="left:402.5px;top:260px;font-size:17.6px;letter-spacing:0.036px;color:#2a65ca;">Select files...</a>
<a class="t" style="left:402.5px;top:300px;font-size:17.6px;letter-spacing:0.1px;color:#2a65ca;">Select folder...</a>
</article>
</section>
</main>
<div class="scroll"><svg class="up" viewBox="0 0 14 15" aria-hidden="true"><path d="M3.9 10L7.5 6L11.1 10Z" fill="#a3a3a3"/></svg><div class="thumb"></div></div>
</body>
</html>
